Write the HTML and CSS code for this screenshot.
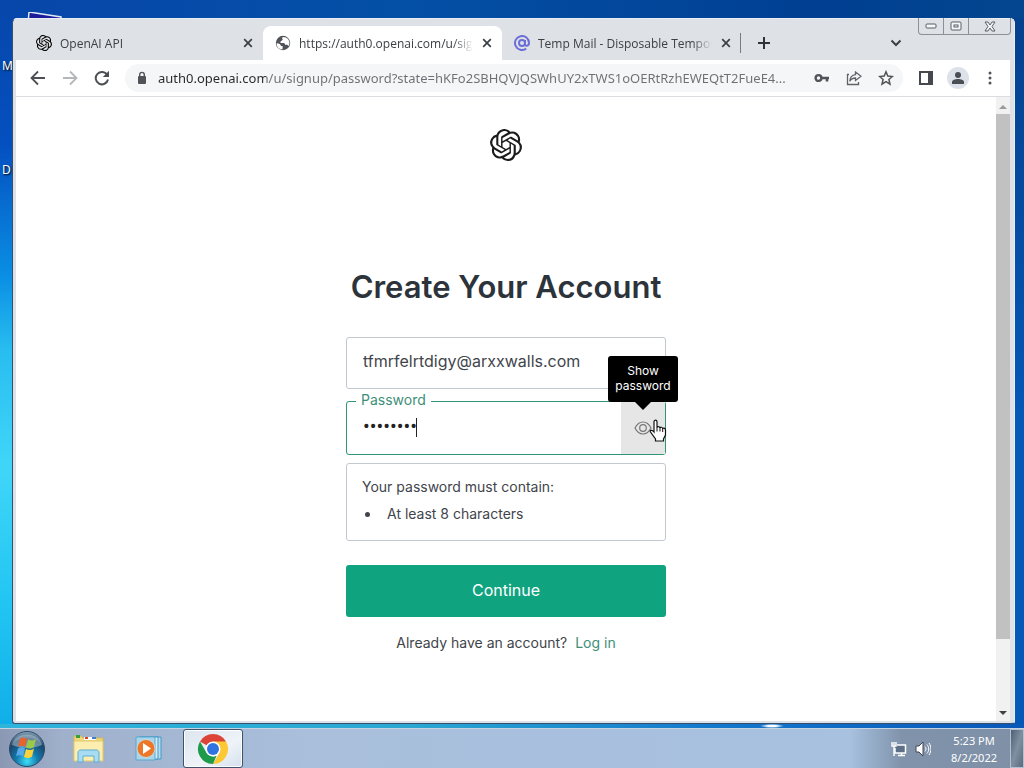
FILE: index.html
```html
<!DOCTYPE html>
<html lang="en">
<head>
    <meta charset="UTF-8">
    <meta name="viewport" content="width=device-width, initial-scale=1.0">
    <title>Create Your Account</title>
    <link rel="stylesheet" href="styles.css">
</head>
<body>
    <svg class="defs" aria-hidden="true">
        <symbol id="openai" viewBox="0 0 24 24">
            <path d="M22.2819 9.8211a5.9847 5.9847 0 0 0-.5157-4.9108 6.0462 6.0462 0 0 0-6.5098-2.9A6.0651 6.0651 0 0 0 4.9807 4.1818a5.9847 5.9847 0 0 0-3.9977 2.9 6.0462 6.0462 0 0 0 .7427 7.0966 5.98 5.98 0 0 0 .511 4.9107 6.051 6.051 0 0 0 6.5146 2.9001A5.9847 5.9847 0 0 0 13.2599 24a6.0557 6.0557 0 0 0 5.7718-4.2058 5.9894 5.9894 0 0 0 3.9977-2.9001 6.0557 6.0557 0 0 0-.7475-7.0729zm-9.022 12.6081a4.4755 4.4755 0 0 1-2.8764-1.0408l.1419-.0804 4.7783-2.7582a.7948.7948 0 0 0 .3927-.6813v-6.7369l2.02 1.1686a.071.071 0 0 1 .038.052v5.5826a4.504 4.504 0 0 1-4.4945 4.4944zm-9.6607-4.1254a4.4708 4.4708 0 0 1-.5346-3.0137l.142.0852 4.783 2.7582a.7712.7712 0 0 0 .7806 0l5.8428-3.3685v2.3324a.0804.0804 0 0 1-.0332.0615L9.74 19.9502a4.4992 4.4992 0 0 1-6.1408-1.6464zM2.3408 7.8956a4.485 4.485 0 0 1 2.3655-1.9728V11.6a.7664.7664 0 0 0 .3879.6765l5.8144 3.3543-2.0201 1.1685a.0757.0757 0 0 1-.071 0l-4.8303-2.7865A4.504 4.504 0 0 1 2.3408 7.872zm16.5963 3.8558L13.1038 8.364 15.1192 7.2a.0757.0757 0 0 1 .071 0l4.8303 2.7913a4.4944 4.4944 0 0 1-.6765 8.1042v-5.6772a.79.79 0 0 0-.407-.667zm2.0107-3.0231l-.142-.0852-4.7735-2.7818a.7759.7759 0 0 0-.7854 0L9.409 9.2297V6.8974a.0662.0662 0 0 1 .0284-.0615l4.8303-2.7866a4.4992 4.4992 0 0 1 6.6802 4.66zM8.3065 12.863l-2.02-1.1638a.0804.0804 0 0 1-.038-.0567V6.0742a4.4992 4.4992 0 0 1 7.3757-3.4537l-.142.0805L8.704 5.459a.7948.7948 0 0 0-.3927.6813zm1.0976-2.3654l2.602-1.4998 2.6069 1.4998v2.9994l-2.5974 1.4997-2.6067-1.4997Z"/>
        </symbol>
        <symbol id="close" viewBox="0 0 12 12">
            <path d="M2.2 2.2l7.6 7.6M9.8 2.2l-7.6 7.6" fill="none" stroke="#3c4043" stroke-width="1.7"/>
        </symbol>
    </svg>

    <div class="desktop">
        <!-- desktop shortcuts, mostly under the window -->
        <svg class="shortcut" viewBox="0 0 36 12"><path d="M2 0l32 5v7H1z" fill="#1b1b9c" stroke="#dfe8f5" stroke-width="1.5"/></svg>
        <span class="shortcut-label first">M</span>
        <span class="shortcut-label second">D</span>

        <div class="window">
            <div class="caption">
                <button class="minimize" aria-label="Minimize"><svg width="14" height="8"><rect x="2" y="2" width="10" height="4" rx="1"/></svg></button>
                <button class="maximize" aria-label="Maximize"><svg width="12" height="10"><rect x="1" y="1" width="10" height="8" rx="1"/><rect x="4" y="4" width="4" height="2"/></svg></button>
                <button class="quit" aria-label="Close"><svg width="12" height="11"><path d="M1 1h3l2 3 2-3h3L8 5.500l3 4.500H8L6 7l-2 3H1l3-4.500z"/></svg></button>
            </div>

            <div class="tab-strip">
                <div class="tab">
                    <svg class="favicon"><use href="#openai"/></svg>
                    <span class="tab-title">OpenAI API</span>
                    <button class="tab-close" aria-label="Close tab"><svg width="12" height="12"><use href="#close"/></svg></button>
                </div>
                <div class="tab active">
                    <svg class="favicon" viewBox="0 0 16 16"><circle cx="8" cy="8" r="7.200" fill="#505458"/><path d="M8.500 2c-2 .6-1.500 2-.6 2.600-.9.500-1 1.800-2.400 1.800v1.700h3c1 0 1.500.8 1.500 1.700h1.600c1 0 1.700.7 2 1.500A6.500 6.500 0 0 0 11 2.400zM1.600 8.200c2.400.3 4.400 1 4.400 2.800h1.600v3.300C4 14.500 1.500 11.500 1.600 8.200z" fill="#fff"/></svg>
                    <span class="tab-title">https://auth0.openai.com/u/signup</span>
                    <button class="tab-close" aria-label="Close tab"><svg width="12" height="12"><use href="#close"/></svg></button>
                </div>
                <div class="tab last">
                    <svg class="favicon" viewBox="0 0 16 16"><g fill="none" stroke="#6c6fd6" stroke-width="2"><circle cx="8" cy="8" r="3"/><path d="M11 5v4.200c0 2.400 4 2.100 4-1.200a7 7 0 1 0-2.800 5.600"/></g></svg>
                    <span class="tab-title">Temp Mail - Disposable Temporary</span>
                    <button class="tab-close" aria-label="Close tab"><svg width="12" height="12"><use href="#close"/></svg></button>
                </div>
                <button class="new-tab" aria-label="New tab"><svg width="14" height="14"><path d="M7 1v12M1 7h12" stroke="#303235" stroke-width="2"/></svg></button>
                <button class="tab-search" aria-label="Search tabs"><svg width="12" height="8"><path d="M1.500 1.500L6 6l4.500-4.500" fill="none" stroke="#3c4043" stroke-width="2"/></svg></button>
            </div>

            <div class="toolbar">
                <button class="tool" aria-label="Back"><svg width="16" height="16" viewBox="0 0 16 16"><path d="M15 8H2M8 1.500L1.500 8 8 14.500" fill="none" stroke="#4c5054" stroke-width="1.800"/></svg></button>
                <button class="tool" aria-label="Forward"><svg width="16" height="16" viewBox="0 0 16 16"><path d="M1 8h13M8 1.500L14.500 8 8 14.500" fill="none" stroke="#b4b6b8" stroke-width="1.800"/></svg></button>
                <button class="tool" aria-label="Reload"><svg width="16" height="16" viewBox="0 0 16 16"><path d="M13.300 5A6.200 6.200 0 1 0 14 9.500" fill="none" stroke="#4c5054" stroke-width="2"/><path d="M15 .8v6.200H8.800z" fill="#4c5054"/></svg></button>
                <div class="omnibox">
                    <svg width="10" height="14" viewBox="0 0 10 14"><rect x="1" y="5" width="8" height="8" rx="1" fill="#505458"/><path d="M2.700 6V3.700a2.300 2.300 0 0 1 4.600 0V6" fill="none" stroke="#505458" stroke-width="1.400"/></svg>
                    <input class="url" type="text" aria-label="Address" value="auth0.openai.com/u/signup/password?state=hKFo2SBHQVJQSWhUY2xTWS1oOERtRzhEWEQtT2FueE4...">
                    <button class="tool" aria-label="Passwords"><svg width="16" height="10" viewBox="0 0 16 10"><circle cx="4.500" cy="5" r="2.900" fill="none" stroke="#505458" stroke-width="2.400"/><path d="M7 5h8M13 5v3.500" fill="none" stroke="#505458" stroke-width="2.600"/></svg></button>
                    <button class="tool" aria-label="Share"><svg width="16" height="16" viewBox="0 0 16 16"><path d="M3 4.500H1.500v10h11v-2.500M9.500 2L15 6.300l-5.500 4.200V8C7 8 5 9 3.800 11.200 4 7.500 6 5 9.500 4.600z" fill="none" stroke="#5f6368" stroke-width="1.300"/></svg></button>
                    <button class="tool" aria-label="Bookmark"><svg width="16" height="16" viewBox="0 0 16 16"><path d="M8 1.800l1.800 4.300 4.600.4-3.500 3 1.100 4.600L8 11.700l-4 2.400 1.100-4.600-3.500-3 4.600-.4z" fill="none" stroke="#505458" stroke-width="1.500"/></svg></button>
                </div>
                <button class="tool" aria-label="Side panel"><svg width="14" height="14"><path d="M1 1h12v12H1z" fill="none" stroke="#45494d" stroke-width="2"/><path d="M9 1h4v12H9z" fill="#45494d"/></svg></button>
                <button class="tool profile" aria-label="Profile"><svg width="14" height="14"><circle cx="7" cy="4" r="3" fill="#4a4e55"/><path d="M1 13v-2c0-4 12-4 12 0v2z" fill="#4a4e55"/></svg></button>
                <button class="tool" aria-label="Menu"><svg width="4" height="14"><g fill="#505458"><circle cx="2" cy="2" r="1.500"/><circle cx="2" cy="7" r="1.500"/><circle cx="2" cy="12" r="1.500"/></g></svg></button>
            </div>

            <div class="viewport">
                <main class="page">
                    <svg class="logo"><use href="#openai"/></svg>
                    <h1>Create Your Account</h1>
                    <form class="signup" onsubmit="return false">
                        <div class="field email">
                            <input type="text" aria-label="Email address" value="tfmrfelrtdigy@arxxwalls.com" readonly>
                            <a class="link" href="#">Edit</a>
                        </div>
                        <div class="field password">
                            <label for="password">Password</label>
                            <input type="password" id="password" value="password">
                            <span class="caret"></span>
                            <button type="button" class="reveal" aria-label="Show password">
                                <svg width="18" height="14" viewBox="0 0 18 14"><g fill="none" stroke="#777" stroke-width="1.200"><path d="M1 7c4-8 12-8 16 0-4 8-12 8-16 0z"/><circle cx="9" cy="7" r="3.300"/></g></svg>
                                <span class="tooltip">Show password</span>
                                <svg class="pointer" width="18" height="24" viewBox="0 0 18 24"><path d="M5 13V3c0-2.500 3-2.500 3 0v6c0-2 3-2 3 .5 0-2 2.700-1.500 2.700.5 0-1.500 2.800-1.200 2.800 1v5l-2 4v2H6.500v-2l-5-7c-1-2 1.500-2.500 3.500 0z" fill="#fff" stroke="#111" stroke-width="1.200"/><path d="M8 9v3.500M11 9.500v3M13.700 10v3" stroke="#111"/></svg>
                            </button>
                        </div>
                        <div class="rules">
                            <p>Your password must contain:</p>
                            <ul>
                                <li>At least 8 characters</li>
                            </ul>
                        </div>
                        <button type="submit" class="continue">Continue</button>
                    </form>
                    <p class="login">Already have an account? <a class="link" href="#">Log in</a></p>
                </main>
                <div class="scrollbar">
                    <svg width="14" height="17"><path d="M3 12l4-4 4 4z" fill="#9a9a9a"/></svg>
                    <div class="track"><div class="thumb"></div></div>
                    <svg width="14" height="17"><path d="M3 7l4 4 4-4z" fill="#404040"/></svg>
                </div>
            </div>
        </div>
    </div>

    <div class="taskbar">
        <button class="start" aria-label="Start">
            <svg width="38" height="38" viewBox="0 0 38 38">
                <defs>
                    <radialGradient id="orb" cx=".5" cy=".85" r=".9"><stop offset="0" stop-color="#3fe0f5"/><stop offset=".35" stop-color="#1479ae"/><stop offset=".7" stop-color="#1b4468"/><stop offset="1" stop-color="#a9c0d2"/></radialGradient>
                </defs>
                <circle cx="19" cy="19" r="17.500" fill="url(#orb)" stroke="#2a4a66"/>
                <path d="M4 15C7 1 31 1 34 15c-9 4-21 4-30 0z" fill="#fff" opacity=".35"/>
                <path d="M12 9c3-2 5-1 7 0l-2 8c-2-1-4-2-7 0z" fill="#e8642c"/>
                <path d="M20 9.500c3 1.500 5 1.500 8-.5l-2 8c-3 2-5 2-8 .5z" fill="#9cc94a"/>
                <path d="M10 18.500c3-2 5-1 7 0l-2 8c-2-1-4-2-7 0z" fill="#58a9e8"/>
                <path d="M18 19c3 1.500 5 1.500 8-.5l-2 8c-3 2-5 2-8 .5z" fill="#fbd23c"/>
            </svg>
        </button>
        <button class="app" aria-label="Explorer">
            <svg width="34" height="30" viewBox="0 0 34 30">
                <path d="M2 2h7l2 2h20v21H2z" fill="#f0d878" stroke="#d1b456"/>
                <path d="M4 1h4v3H4z" fill="#36a13b"/><path d="M12 3h12v3H12z" fill="#fff"/><path d="M13 3h3v2h-3z" fill="#d4472b"/><path d="M20 3h4v2h-4z" fill="#3f7fd0"/>
                <path d="M2 7h29v20H2z" fill="#fbeeb0" stroke="#e0c873"/>
                <path d="M6 28V19c0-2 1-3 3-3h15c2 0 3 1 3 3v9h-5v-6H11v6z" fill="#a8dcf3" stroke="#5aaed4"/>
            </svg>
        </button>
        <button class="app" aria-label="Media Player">
            <svg width="28" height="26" viewBox="0 0 28 26">
                <path d="M6 1h20v22H6z" fill="#b5ddf0" stroke="#4696c4"/><path d="M4 1h19v22H4z" fill="#d1edf8" stroke="#4696c4"/><path d="M1 1h19v23H1z" fill="#a9d5ea" stroke="#5ba7cd"/>
                <circle cx="11" cy="12.500" r="9" fill="#ee7627" stroke="#c9d7de"/><path d="M8 7v11l8-5.500z" fill="#fff"/>
            </svg>
        </button>
        <button class="app running" aria-label="Chrome">
            <svg width="32" height="32" viewBox="0 0 32 32">
                <path d="M16 16L3 8.500A15 15 0 0 1 29 8.500z" fill="#dc4437"/>
                <path d="M16 8.500h13A15 15 0 0 1 16 31l6.500-11.300z" fill="#fcc934"/>
                <path d="M3 8.500l6.500 11.300c2 3 6 4.500 10 3L16 31A15 15 0 0 1 3 8.500z" fill="#1e9a4b"/>
                <circle cx="16" cy="16" r="7.500" fill="#fff"/><circle cx="16" cy="16" r="6" fill="#2f74e0"/>
            </svg>
        </button>
        <div class="tray">
            <svg width="16" height="16" viewBox="0 0 16 16"><path d="M6 4h8.500v8H4V7" fill="#5d7088" stroke="#fff" stroke-width="1.500"/><path d="M1 1v4h4V1M3 1v3M3 5v10M7 14.500h7M10.500 12v2" fill="none" stroke="#fff" stroke-width="1.400"/></svg>
            <svg width="16" height="16" viewBox="0 0 16 16"><path d="M1 5h3l4-4v14l-4-4H1z" fill="#fff" stroke="#445"/><path d="M10 5.500c1.300 1.500 1.300 3.500 0 5M12 3.500c2.300 3 2.300 6 0 9M14 2c2.500 4 2.500 8 0 12" fill="none" stroke="#fff"/></svg>
            <div class="clock"><span>5:23 PM</span><span>8/2/2022</span></div>
            <button class="show-desktop" aria-label="Show desktop"></button>
        </div>
    </div>
</body>
</html>
```
FILE: styles.css
```css
* {
    box-sizing: border-box;
}
body {
    margin: 0;
    height: 100vh;
    display: flex;
    flex-direction: column;
    overflow: hidden;
    font-family: "Noto Sans", sans-serif;
    font-size: 12px;
    color: #3c4043;
}
button {
    padding: 0;
    border: none;
    background: none;
    font-family: inherit;
    display: flex;
    align-items: center;
    justify-content: center;
}
.defs {
    display: none;
}

/* desktop */
.desktop {
    position: relative;
    flex: 1;
    min-height: 0;
    display: flex;
    padding: 18px 9px 4px 12px;
    background:
        radial-gradient(closest-side, #fff 40%, transparent) 76% 100% / 24px 4px no-repeat,
        linear-gradient(to right, #2fb4dc, #2ba7d2 40%, #1478cc 70%, #0a58b8) 0 100% / 100% 4px no-repeat,
        linear-gradient(to right, #0746aa, #0450a6 40%, #003f92 80%, #04468f) 0 0 / 100% 18px no-repeat,
        linear-gradient(#0746aa, #0450c0 20%, #0a8fe4 38%, #28bdf0 48%, #40d6f8 64%, #20c4f2 84%, #10aee8) 0 0 / 20px 100% no-repeat,
        linear-gradient(#04408c, #0459b8 60%);
}
.shortcut {
    position: absolute;
    left: 27px;
    top: 12px;
    width: 36px;
    height: 12px;
}
.shortcut-label {
    position: absolute;
    left: 2px;
    color: #fff;
    text-shadow: 1px 1px 2px #000;
}
.shortcut-label.first {
    top: 57px;
}
.shortcut-label.second {
    top: 161px;
}

/* browser window */
.window {
    position: relative;
    flex: 1;
    min-width: 0;
    display: flex;
    flex-direction: column;
    padding: 0 4px 2px 3px;
    background: #dee1e6;
    border: 1px solid #33506e;
    border-top-color: #e8eef4;
    border-right-color: #e8eef4;
    border-radius: 5px 5px 3px 3px;
}
.caption {
    position: absolute;
    top: -1px;
    right: 3px;
    display: flex;
    border: 1px solid #8b8f96;
    border-top: none;
    border-radius: 0 0 4px 4px;
}
.caption button {
    width: 25px;
    height: 16px;
    border-right: 1px solid #8b8f96;
}
.caption .quit {
    width: 41px;
    border: none;
}
.caption svg {
    fill: #f6f7f9;
    stroke: #5a5e66;
}
.tab-strip {
    display: flex;
    height: 41px;
    padding: 7px 0 0 8px;
    font-family: "Open Sans", sans-serif;
}
.tab {
    flex: 0 1 239px;
    min-width: 0;
    display: flex;
    align-items: center;
    gap: 8px;
    padding: 0 9px 0 12px;
}
.tab.active {
    background: #fff;
    border-radius: 8px 8px 0 0;
}
.tab.last {
    background: linear-gradient(#777b82, #777b82) right center / 1px 20px no-repeat;
}
.favicon {
    flex: none;
    width: 16px;
    height: 16px;
}
.tab-title {
    flex: 1;
    overflow: hidden;
    white-space: nowrap;
    mask-image: linear-gradient(to left, transparent, #000 20px);
}
.new-tab {
    margin-left: 9px;
    width: 28px;
}
.tab-search {
    margin-left: auto;
    margin-right: 100px;
    width: 28px;
}
.toolbar {
    display: flex;
    align-items: center;
    gap: 4px;
    height: 37px;
    padding: 0 6px 0 8px;
    background: #fff;
    border-bottom: 1px solid #dadce0;
}
.tool {
    flex: none;
    width: 28px;
    height: 28px;
}
.omnibox {
    flex: 1;
    min-width: 0;
    display: flex;
    align-items: center;
    gap: 4px;
    height: 28px;
    margin: 0 5px;
    padding: 0 3px 0 12px;
    border-radius: 14px;
    background: #f4f6f7;
}
.url {
    flex: 1;
    min-width: 0;
    margin-left: 7px;
    padding: 0;
    border: none;
    outline: none;
    font-family: inherit;
    font-size: 13px;
    color: transparent;
    /* host part darker than the path */
    background: linear-gradient(to right, #27292c 108px, #6c7074 108px);
    background-clip: text;
    -webkit-background-clip: text;
}
.profile {
    width: 22px;
    height: 22px;
    margin: 0 3px;
    border-radius: 50%;
    background: #dce1ea;
}

/* page */
.viewport {
    flex: 1;
    min-height: 0;
    display: flex;
    background: #fff;
}
.page {
    flex: 1;
    min-width: 0;
    display: flex;
    flex-direction: column;
    align-items: center;
    padding-top: 32px;
    overflow: hidden;
    font-family: Inter, sans-serif;
    color: #3f454b;
}
.logo {
    flex: none;
    width: 32px;
    height: 32px;
    fill: #1c1c1c;
}
h1 {
    margin: 106px 0 30px;
    font-size: 31px;
    line-height: 40px;
    font-weight: 600;
    color: #2d333a;
}
.signup {
    width: 320px;
    display: flex;
    flex-direction: column;
}
.field {
    position: relative;
    display: flex;
    align-items: center;
    height: 52px;
    border: 1px solid #c2c8d0;
    border-radius: 3px;
}
.field input {
    flex: 1;
    min-width: 0;
    padding: 0 0 4px 16px;
    border: none;
    outline: none;
    background: none;
    font-family: inherit;
    font-size: 16px;
    color: #3f454b;
    caret-color: transparent;
}
.link {
    color: #3d8f78;
    text-decoration: none;
}
.email .link {
    padding-right: 20px;
    font-size: 16px;
}
.password {
    height: 54px;
    margin: 12px 0 8px;
    border-color: #2f9478;
}
.field input[type="password"] {
    font-family: Roboto, sans-serif;
    font-size: 20px;
    color: #222;
}
.password label {
    position: absolute;
    left: 9px;
    top: -11px;
    padding: 0 5px;
    background: #fff;
    font-size: 14px;
    line-height: 18px;
    color: #3d8f78;
}
.caret {
    position: absolute;
    left: 69px;
    top: 16px;
    width: 1px;
    height: 19px;
    background: #222;
}
.reveal {
    position: relative;
    align-self: stretch;
    width: 44px;
    background: #e6e6e6;
}
.tooltip {
    position: absolute;
    left: 50%;
    bottom: 100%;
    transform: translateX(-50%);
    width: 70px;
    padding: 7px 0 9px;
    border-radius: 3px;
    background: #000;
    color: #fff;
    font-size: 12px;
    line-height: 15px;
    text-align: center;
}
.tooltip::after {
    content: "";
    position: absolute;
    left: 50%;
    top: 100%;
    margin-left: -8px;
    border: 8px solid transparent;
    border-top-color: #000;
    border-bottom: none;
}
.pointer {
    position: absolute;
    left: 28px;
    top: 17px;
}
.rules {
    padding: 13px 15px 16px;
    border: 1px solid #c2c8d0;
    border-radius: 3px;
    font-size: 14px;
    line-height: 20px;
}
.rules p {
    margin: 0 0 7px;
}
.rules ul {
    margin: 0;
    padding-left: 19px;
}
.rules li {
    padding-left: 6px;
}
.continue {
    height: 52px;
    margin-top: 24px;
    padding-bottom: 3px;
    border-radius: 3px;
    background: #10a37f;
    color: #fff;
    font-size: 16px;
}
.login {
    margin: 16px 0 0;
    font-size: 14px;
    line-height: 20px;
}
.login .link {
    margin-left: 4px;
}
.scrollbar {
    width: 14px;
    display: flex;
    flex-direction: column;
    background: #f1f1f1;
}
.track {
    flex: 1;
}
.thumb {
    height: 89%;
    background: #c1c1c1;
}

/* taskbar */
.taskbar {
    display: flex;
    height: 40px;
    padding-left: 8px;
    border-top: 1px solid #c6d3e2;
    background: linear-gradient(to right, #8b98b4, #9fb0cb 6%, #a9bfdc 30%, #a7c1df 83%, #8093ab 88%, #7f90a6);
}
.start {
    width: 38px;
}
.app {
    width: 60px;
}
.start + .app {
    margin-left: 13px;
}
.running {
    margin-left: 4px;
    border: 1px solid #3f526b;
    border-radius: 3px;
    background: linear-gradient(to bottom right, #dce5ee, #eef3f8 60%, #d5e0ec);
    box-shadow: inset 0 0 0 1px #fff;
}
.tray {
    display: flex;
    align-items: center;
    gap: 8px;
    margin-left: auto;
    color: #fff;
}
.clock {
    display: flex;
    flex-direction: column;
    align-items: center;
    margin: 0 5px 0 12px;
    font-size: 11px;
    line-height: 17px;
}
.show-desktop {
    width: 14px;
    height: 39px;
    border: 1px solid #b3c0cf;
    background: linear-gradient(to bottom right, #4f6074, #7f90a2 50%, #5a6b7f);
}
```
